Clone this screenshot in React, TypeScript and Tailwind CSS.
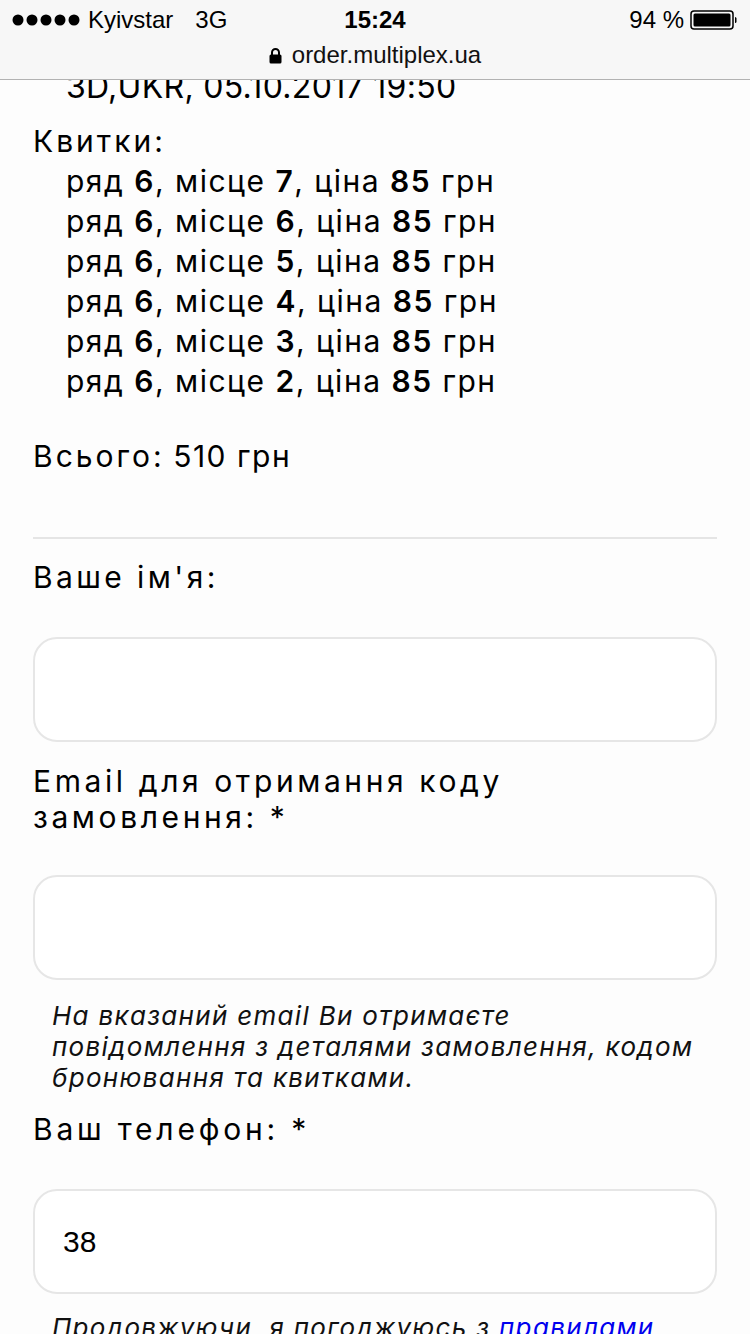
import React from "react";

const tickets = [7, 6, 5, 4, 3, 2];

function Signal() {
  return (
    <svg width="68" height="12" viewBox="0 0 68 12">
      {[0, 1, 2, 3, 4].map((i) => (
        <circle key={i} cx={6 + i * 14} cy="6" r="5.5" fill="#000" />
      ))}
    </svg>
  );
}

function Battery() {
  return (
    <svg width="48" height="20" viewBox="0 0 48 20">
      <rect x="1" y="1" width="42" height="18" rx="3" fill="none" stroke="#000" strokeWidth="1.5" />
      <rect x="3.5" y="3.5" width="37" height="13" rx="1.5" fill="#000" />
      <path d="M45 7 a1.5 1.5 0 0 1 1.5 1.5 v3 a1.5 1.5 0 0 1 -1.5 1.5 z" fill="#000" />
    </svg>
  );
}

function Lock() {
  return (
    <svg width="13" height="17" viewBox="0 0 13 17">
      <path d="M3 8 V5.5 a3.5 3.5 0 0 1 7 0 V8" fill="none" stroke="#000" strokeWidth="2" />
      <rect x="0.5" y="7.5" width="12" height="9" rx="1.5" fill="#000" />
    </svg>
  );
}

function Field({ value }: { value?: string }) {
  return (
    <div className="h-[105px] rounded-[24px] border-2 border-[#e6e6e6] bg-white flex items-center px-[28px] text-[30px] text-black font-['Liberation_Sans',sans-serif]">
      {value}
    </div>
  );
}

export default function App() {
  return (
    <div className="relative h-[1334px] w-[750px] overflow-hidden bg-[#fdfdfd] text-black font-['Inter','Noto_Sans',sans-serif]">
      {/* браузерна шапка поверх сторінки */}
      <header className="absolute top-0 left-0 right-0 z-10 h-[80px] bg-[#f7f7f7] border-b border-[#b2b2b2] font-['Liberation_Sans',Arial,sans-serif]">
        <div className="relative flex items-center h-[40px] px-[12px] text-[24px]">
          <div className="flex items-center">
            <Signal />
            <span className="ml-[8px]">Kyivstar</span>
            <span className="ml-[22px]">3G</span>
          </div>
          <div className="absolute left-0 right-0 text-center font-bold pointer-events-none">15:24</div>
          <div className="ml-auto flex items-center gap-[6px]">
            <span>94 %</span>
            <Battery />
          </div>
        </div>
        <div className="flex items-center justify-center gap-[10px] h-[30px] text-[24px] text-[#111]">
          <Lock />
          <span>order.multiplex.ua</span>
        </div>
      </header>

      <main className="px-[33px] pt-[67px]">
        <div className="pl-[33px] text-[32px] leading-[40px] tracking-[0.3px]">3D,UKR, 05.10.2017 19:50</div>

        <div className="mt-[14px] text-[30px] leading-[40px]">
          <div className="tracking-[3px]">Квитки:</div>
          {tickets.map((seat) => (
            <div key={seat} className="pl-[33px] tracking-[1.5px]">
              ряд <b className="font-semibold">6</b>, місце <b className="font-semibold">{seat}</b>, ціна{" "}
              <b className="font-semibold">85</b> грн
            </div>
          ))}
        </div>

        <div className="mt-[35px] text-[30px] leading-[40px]">
          <span className="tracking-[3px]">Всього:</span> <span className="tracking-[1.5px]">510 грн</span>
        </div>

        <div className="mt-[61px] h-[2px] bg-[#e5e5e5]" />

        <div className="mt-[18px] text-[30px] leading-[40px] tracking-[3.4px]">Ваше ім'я:</div>
        <div className="mt-[40px]">
          <Field />
        </div>

        <div className="mt-[21px] text-[30px] leading-[36px] tracking-[3.6px]">
          Email для отримання коду
          <br />
          замовлення: *
        </div>
        <div className="mt-[40px]">
          <Field />
        </div>

        <p className="mt-[20px] pl-[19px] text-[26px] leading-[31px] italic tracking-[1.3px] text-[#111] whitespace-nowrap">
          На вказаний email Ви отримаєте
          <br />
          повідомлення з деталями замовлення, кодом
          <br />
          бронювання та квитками.
        </p>

        <div className="mt-[16px] text-[30px] leading-[40px] tracking-[3.8px]">Ваш телефон: *</div>
        <div className="mt-[40px]">
          <Field value="38" />
        </div>

        <p className="mt-[18px] pl-[19px] text-[26px] leading-[31px] italic tracking-[1.3px] text-[#111] whitespace-nowrap">
          Продовжуючи, я погоджуюсь з{" "}
          <a href="#" className="text-[#0000ee] underline">
            правилами
          </a>
        </p>
      </main>
    </div>
  );
}
